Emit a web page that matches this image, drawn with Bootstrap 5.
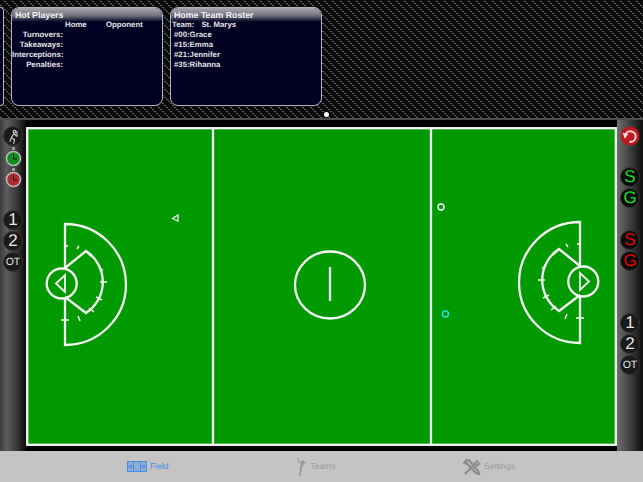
<!DOCTYPE html>
<html lang="en">
<head>
    <meta charset="UTF-8" />
    <meta name="viewport" content="width=device-width, initial-scale=1.0" />
    <title>Lacrosse Field</title>
    <link href="https://cdn.jsdelivr.net/npm/bootstrap@5.3.6/dist/css/bootstrap.min.css" rel="stylesheet">
    <style>
        body { width: 643px; height: 482px; overflow: hidden; background: #000; font-family: "Liberation Sans", Arial, sans-serif; text-rendering: geometricPrecision; }
        .carbon-strip {
            height: 118px; padding: 7px 0 0 0; gap: 7px; position: relative;
            background-color: #0c0c0c;
            background-image:
                repeating-linear-gradient(-45deg, rgba(8,8,8,.8) 0 1.414px, transparent 1.414px 2.828px),
                repeating-linear-gradient(45deg, #5e5e5e 0 2px, transparent 2px 5.657px);
        }
        .info-card { width: 152px; height: 99px; background: #000022; border: 1px solid #b4b4c0; border-radius: 8px; color: #e6e6e6; font-size: 7.8px; font-weight: 700; line-height: 10px; overflow: hidden; flex: none; }
        .info-card.cut-off { width: 4px; border-left: 0; border-radius: 0 6px 6px 0; }
        .info-head { height: 14px; padding: 1px 0 0 3px; font-size: 8.8px; line-height: 12px; color: #f0f0f0; background: linear-gradient(#a8a8b0, #70707e 55%, #000022); }
        .stat-grid { display: grid; grid-template-columns: 51px 40px 44px; margin-top: -2px; }
        .stat-grid > div:nth-child(3n+1) { text-align: right; }
        .stat-grid > div:nth-child(3n+2) { padding-left: 2px; }
        .stat-grid > div:nth-child(3n) { padding-left: 3px; }
        .roster-list { margin-top: -2px; padding-left: 1px; }
        .roster-list p { margin: 0 0 0 2px; }
        .roster-team { display: flex; gap: 7px; }
        .pager-dot { position: absolute; left: 324px; top: 112px; width: 5px; height: 5px; border-radius: 50%; background: #fff; }
        .play-area { height: 333px; border-top: 2px solid #4d4d4d; }
        .side-rail { width: 26px; flex: none; align-items: center; padding-top: 6px; background: linear-gradient(90deg, #3c3c3c, #5c5c5c 25%, #3e3e3e 60%, #0a0a0a); }
        .side-rail.right-rail { background: linear-gradient(90deg, #6e6e6e, #444 45%, #0e0e0e); }
        .rail-btn { width: 20px; height: 20px; border-radius: 50%; flex: none; background: #1a1a1a; border: 1px solid #333; color: #e8e8e8; font-size: 17px; line-height: 18px; text-align: center; margin-bottom: 1px; padding: 0; }
        .rail-btn.small-text { font-size: 10.5px; }
        .rail-btn.bare { background: none; border: 0; }
        .rail-btn.watch { height: 21px; margin-bottom: 0; }
        .rail-btn.go { color: #12e02a; background: #0c0c0c; }
        .rail-btn.stop { color: #e80000; background: #0c0c0c; }
        .field-wrap { flex: 1; padding-top: 7px; }
        .field-wrap svg { display: block; }
        .tab-strip { height: 31px; background: #c4c4c4; padding: 0 128px 0 127px; }
        .tab-item { gap: 3px; color: #9b9b9b; font-size: 8.6px; }
        .tab-item.active-tab { color: #4a90e8; }
    </style>
</head>
<body>
    <div class="carbon-strip d-flex">
        <div class="info-card cut-off"></div>
        <div class="info-card">
            <div class="info-head">Hot Players</div>
            <div class="stat-grid">
                <div></div><div>Home</div><div>Opponent</div>
                <div>Turnovers:</div><div></div><div></div>
                <div>Takeaways:</div><div></div><div></div>
                <div>Interceptions:</div><div></div><div></div>
                <div>Penalties:</div><div></div><div></div>
            </div>
        </div>
        <div class="info-card">
            <div class="info-head">Home Team Roster</div>
            <div class="roster-list">
                <div class="roster-team"><span>Team:</span><span>St. Marys</span></div>
                <p>#00:Grace</p>
                <p>#15:Emma</p>
                <p>#21:Jennifer</p>
                <p>#35:Rihanna</p>
            </div>
        </div>
        <div class="pager-dot"></div>
    </div>

    <div class="play-area d-flex">
        <div class="side-rail d-flex flex-column">
            <div class="rail-btn">
                <svg width="18" height="18" viewBox="0 0 17 17" fill="none" stroke="#c8c8c8" stroke-width="1.1"><circle cx="10" cy="3.5" r="1.3"/><path d="M9.5 5 7 9l3 2-1 4M7 9 5.5 13M9.5 5.5l2.5 2.5M12 3 12.5 8"/></svg>
            </div>
            <div class="rail-btn bare watch">
                <svg width="17" height="21" viewBox="0 0 17 21" class="d-block mx-auto"><rect x="7" y="0" width="3" height="3" fill="#999"/><circle cx="8.5" cy="11.5" r="7" fill="#0f8f1c" stroke="#b8b8b8" stroke-width="1.6"/><path d="M8.5 7v5h3.5" stroke="#111" fill="none"/></svg>
            </div>
            <div class="rail-btn bare watch">
                <svg width="17" height="21" viewBox="0 0 17 21" class="d-block mx-auto"><rect x="7" y="0" width="3" height="3" fill="#999"/><circle cx="8.5" cy="11.5" r="7" fill="#b02c30" stroke="#b8b8b8" stroke-width="1.6"/><path d="M8.5 7v5h3.5" stroke="#111" fill="none"/></svg>
            </div>
            <div class="rail-btn" style="margin-top:21px">1</div>
            <div class="rail-btn">2</div>
            <div class="rail-btn small-text">OT</div>
        </div>

        <div class="field-wrap">
            <svg width="591" height="319" viewBox="26 127 591 319" fill="none" stroke="#f4f8f4" stroke-width="2.3">
                <rect x="26" y="127" width="591" height="319" fill="#009900" stroke="none"/>
                <rect x="27.2" y="128.2" width="588.6" height="316.6"/>
                <path d="M213 128V445M431 128V445M330 267V301"/>
                <ellipse cx="330" cy="285" rx="35" ry="33.5"/>
                <g id="crease">
                    <path d="M65 224A61 60.5 0 0 1 65 345Z"/>
                    <circle cx="61.7" cy="283.5" r="15" fill="#009900"/>
                    <path d="M56 283.5 65 275V292Z" stroke-width="1.8"/>
                    <path d="M65 268 86 251A37 37 0 0 1 86 313L65 297"/>
                    <path stroke-width="1.5" d="M64 246H68M77 249 79 246M87.3 253 92 257M99 267.5 103 270.5M100 282H107M96 297 102 300M89 308 94 312M61 320H69M78 316 80 321"/>
                </g>
                <use href="#crease" transform="translate(645 -2) scale(-1 1)"/>
                <path d="M178 215 172.5 218.5 178 221Z" stroke-width="1.2"/>
                <circle cx="441" cy="207" r="3" stroke-width="1.4"/>
                <circle cx="445.5" cy="314" r="3" stroke="#22e0e8" stroke-width="1.5"/>
            </svg>
        </div>

        <div class="side-rail right-rail d-flex flex-column">
            <div class="rail-btn bare">
                <svg width="20" height="20" viewBox="0 0 19 19" class="d-block"><circle cx="9.5" cy="9.5" r="9" fill="#c01820"/><path d="M5 9a5 5 0 1 1 4 6" stroke="#f0d8d8" stroke-width="2" fill="none"/><path d="M2.5 6.5 8 7.5 4.5 12Z" fill="#f0d8d8"/></svg>
            </div>
            <div class="rail-btn go" style="margin-top:20px">S</div>
            <div class="rail-btn go">G</div>
            <div class="rail-btn stop" style="margin-top:21px">S</div>
            <div class="rail-btn stop">G</div>
            <div class="rail-btn" style="margin-top:41px">1</div>
            <div class="rail-btn">2</div>
            <div class="rail-btn small-text">OT</div>
        </div>
    </div>

    <nav class="tab-strip d-flex justify-content-between align-items-center">
        <div class="tab-item active-tab d-flex align-items-center">
            <svg width="20" height="11" viewBox="0 0 20 11" fill="#4a90e8" fill-opacity=".45" stroke="#4a90e8"><rect x=".5" y=".5" width="19" height="10"/><path d="M6.5 .5v10M13.5 .5v10" fill="none"/><circle cx="3.5" cy="5.5" r="1.5"/><circle cx="16.5" cy="5.5" r="1.5"/></svg>
            <span>Field</span>
        </div>
        <div class="tab-item d-flex align-items-center">
            <svg width="11" height="18" viewBox="0 0 11 18" fill="#9b9b9b"><circle cx="6.5" cy="4" r="1.6"/><path d="M1 0 2.5 4 5 6 3.5 10 4 13 2.5 17.5 4.5 17.5 6 12.5 6 9.5 8 6 10 4.5 9.5 3.5 7 5 4 4 2 0Z"/></svg>
            <span>Teams</span>
        </div>
        <div class="tab-item d-flex align-items-center">
            <svg width="18" height="16" viewBox="0 0 18 16" fill="none" stroke="#8e8e8e" stroke-width="2.4"><path d="M2 15 13 4M15 1.5 12 4.5 14 6.5 17 4M3 1.5 6 1 15 12 16 15 13 14 4 4.5 1.5 4Z"/></svg>
            <span>Settings</span>
        </div>
    </nav>
    <script src="https://cdn.jsdelivr.net/npm/bootstrap@5.3.6/dist/js/bootstrap.bundle.min.js"></script>
</body>
</html>
